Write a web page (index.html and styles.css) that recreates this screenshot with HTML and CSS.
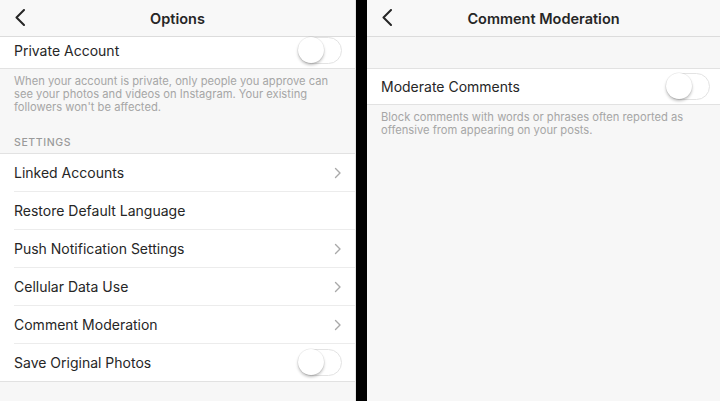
FILE: index.html
```html
<!DOCTYPE html>
<html lang="en">
  <head>
    <meta charset="UTF-8" />
    <meta name="viewport" content="width=device-width, initial-scale=1.0" />
    <title>Options</title>
    <link rel="stylesheet" href="styles.css">
  </head>
  <body>
    <div id="screens">
      <!-- Options screen -->
      <div class="screen screen-left">
        <div class="nav-bar">
          <svg class="back-icon" width="10" height="17" viewBox="0 0 10 17">
            <polyline points="9,1 1.5,8.5 9,16" />
          </svg>
          <h1 class="nav-title">Options</h1>
        </div>

        <div class="group">
          <div class="row row-short">
            <span class="row-label">Private Account</span>
            <span class="toggle"><span class="knob"></span></span>
          </div>
        </div>
        <p class="note">
          When your account is private, only people you approve can see your
          photos and videos on Instagram. Your existing followers won't be
          affected.
        </p>

        <div class="section-title">SETTINGS</div>
        <div class="group">
          <div class="row">
            <span class="row-label">Linked Accounts</span>
            <svg class="chevron" width="8" height="12" viewBox="0 0 8 12">
              <polyline points="1.5,1.5 6,6 1.5,10.5" />
            </svg>
          </div>
          <div class="row">
            <span class="row-label">Restore Default Language</span>
          </div>
          <div class="row">
            <span class="row-label">Push Notification Settings</span>
            <svg class="chevron" width="8" height="12" viewBox="0 0 8 12">
              <polyline points="1.5,1.5 6,6 1.5,10.5" />
            </svg>
          </div>
          <div class="row">
            <span class="row-label">Cellular Data Use</span>
            <svg class="chevron" width="8" height="12" viewBox="0 0 8 12">
              <polyline points="1.5,1.5 6,6 1.5,10.5" />
            </svg>
          </div>
          <div class="row">
            <span class="row-label">Comment Moderation</span>
            <svg class="chevron" width="8" height="12" viewBox="0 0 8 12">
              <polyline points="1.5,1.5 6,6 1.5,10.5" />
            </svg>
          </div>
          <div class="row">
            <span class="row-label">Save Original Photos</span>
            <span class="toggle"><span class="knob"></span></span>
          </div>
        </div>
      </div>

      <!-- Comment Moderation screen -->
      <div class="screen screen-right">
        <div class="nav-bar">
          <svg class="back-icon" width="10" height="17" viewBox="0 0 10 17">
            <polyline points="9,1 1.5,8.5 9,16" />
          </svg>
          <h1 class="nav-title">Comment Moderation</h1>
        </div>

        <div class="group group-spaced">
          <div class="row row-mid">
            <span class="row-label">Moderate Comments</span>
            <span class="toggle"><span class="knob"></span></span>
          </div>
        </div>
        <p class="note">
          Block comments with words or phrases often reported as offensive
          from appearing on your posts.
        </p>
      </div>
    </div>
  </body>
</html>
```

FILE: styles.css
```css
body {
  margin: 0;
  background: #000;
  font-family: "Inter", "Liberation Sans", sans-serif;
  color: #262626;
}

#screens {
  display: flex;
  gap: 11px;
  width: 720px;
  height: 401px;
  overflow: hidden;
}

.screen {
  background: #f7f7f7;
  display: flex;
  flex-direction: column;
}

.screen-left {
  width: 356px;
  border-right: 1px solid #e4e4e4;
  box-sizing: border-box;
}

.screen-right {
  flex: 1;
}

/* top navigation */
.nav-bar {
  position: relative;
  height: 36px;
  flex-shrink: 0;
  background: #f8f8f8;
  border-bottom: 1px solid #dcdcdc;
  display: flex;
  align-items: center;
  justify-content: center;
}

.nav-title {
  margin: 0;
  font-size: 14.5px;
  font-weight: 600;
  color: #262626;
}

.back-icon {
  position: absolute;
  left: 15px;
  top: 9px;
}

.back-icon polyline {
  fill: none;
  stroke: #262626;
  stroke-width: 2;
  stroke-linecap: round;
  stroke-linejoin: round;
}

/* grouped rows */
.group {
  background: #fff;
  border-bottom: 1px solid #e2e2e2;
}

.group-spaced {
  margin-top: 31px;
  border-top: 1px solid #e2e2e2;
}

.row {
  height: 37px;
  margin-left: 14px;
  padding-right: 13px;
  display: flex;
  align-items: center;
  justify-content: space-between;
  border-bottom: 1px solid #ececec;
}

.row:last-child {
  border-bottom: none;
}

.row-short {
  height: 26px;
  padding-bottom: 5px;
}

.row-mid {
  height: 35px;
  padding-right: 10px;
}

.row-label {
  font-size: 14px;
  color: #262626;
}

.chevron polyline {
  fill: none;
  stroke: #a9a9a9;
  stroke-width: 1.4;
  stroke-linecap: round;
  stroke-linejoin: round;
}

/* switch, off state */
.toggle {
  width: 44px;
  height: 27px;
  box-sizing: border-box;
  border: 1.5px solid #e3e3e3;
  border-radius: 14px;
  background: #fff;
  position: relative;
}

.knob {
  position: absolute;
  left: -1px;
  top: -1px;
  width: 26px;
  height: 26px;
  border-radius: 50%;
  background: #fff;
  box-shadow: 0 2px 3px rgba(0, 0, 0, 0.25), 0 0 0 0.5px rgba(0, 0, 0, 0.08);
}

/* footnotes and headers */
.note {
  margin: 6px 20px 0 14px;
  font-size: 11.2px;
  line-height: 13px;
  color: #a6a6a6;
}

.section-title {
  margin: 22px 14px 4px;
  font-size: 10.5px;
  font-weight: 500;
  letter-spacing: 0.6px;
  color: #9a9a9a;
  line-height: 13px;
}

.screen-left .group:last-child {
  border-top: 1px solid #e2e2e2;
}
```
